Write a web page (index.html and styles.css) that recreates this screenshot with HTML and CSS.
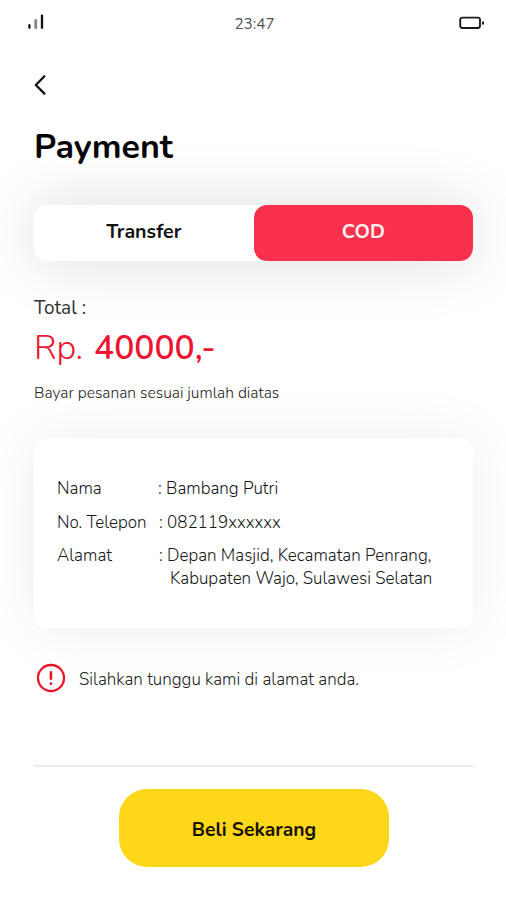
FILE: index.html
```html
<!DOCTYPE html>
<html lang="id">
<head>
<meta charset="utf-8">
<title>Payment</title>
<link rel="stylesheet" href="styles.css">
</head>
<body>
<main class="screen">
  <header class="status">
    <svg class="signal" width="17" height="16" viewBox="0 0 17 16" fill="none" stroke-linecap="round">
      <path d="M2.4 11.2V13.8" stroke="#111" stroke-width="2.2"/>
      <path d="M8.7 6.5V13.8" stroke="#858585" stroke-width="2.8"/>
      <path d="M15 1.6V13.8" stroke="#111" stroke-width="2.3"/>
    </svg>
    <span class="time">23:47</span>
    <svg class="battery" width="26" height="14" viewBox="0 0 26 14" fill="none">
      <rect x="1.2" y="1.6" width="19.8" height="10.4" rx="2.2" stroke="#1b1b1b" stroke-width="1.9"/>
      <path d="M24 6.3V7.7" stroke="#111" stroke-width="1.9" stroke-linecap="round"/>
    </svg>
  </header>
  <button class="back" aria-label="Kembali">
    <svg width="13" height="22" viewBox="0 0 13 22" fill="none" stroke="#111" stroke-width="2.3" stroke-linecap="round" stroke-linejoin="round"><path d="M10.4 2.2L1.8 11L10.4 19.6"/></svg>
  </button>
  <h1 class="title">Payment</h1>
  <div class="tabs">
    <button class="tab">Transfer</button>
    <button class="tab active">COD</button>
  </div>
  <section class="total">
    <p class="label">Total :</p>
    <p class="amount"><span class="currency">Rp.</span><span class="value">40000,-</span></p>
    <p class="hint">Bayar pesanan sesuai jumlah diatas</p>
  </section>
  <dl class="card">
    <dt>Nama</dt><dd class="name"><span class="colon">:</span>Bambang Putri</dd>
    <dt>No. Telepon</dt><dd><span class="colon">:</span>082119xxxxxx</dd>
    <dt>Alamat</dt><dd><span class="colon">:</span>Depan Masjid, Kecamatan Penrang,<br><span class="second">Kabupaten Wajo, Sulawesi Selatan</span></dd>
  </dl>
  <div class="notice">
    <svg width="30" height="30" viewBox="0 0 30 30" fill="none" stroke="#e91728" stroke-linecap="round">
      <circle cx="15" cy="15" r="13" stroke-width="2.3"/>
      <path d="M14.9 9.4V15.7" stroke-width="2.6"/><path d="M14.9 20.6V20.7" stroke-width="2.8"/>
    </svg>
    <span>Silahkan tunggu kami di alamat anda.</span>
  </div>
  <footer class="footer">
    <button class="buy">Beli Sekarang</button>
  </footer>
</main>
</body>
</html>
```
FILE: styles.css
```css
* { box-sizing: border-box; }
body { margin: 0; background: #fff; color: #111; font-family: Nunito, Lato, sans-serif; }
p, h1, dl, dd { margin: 0; }
button { border: 0; padding: 0; background: none; color: inherit; font: inherit; }
svg { display: block; }
.screen { width: 506px; height: 900px; padding: 0 33px 0 34px; overflow: hidden; white-space: nowrap; }
.status { display: flex; justify-content: space-between; height: 46px; margin: 0 -12px 0 -7px; padding-top: 14px; }
.time { margin-left: 6px; font-size: 15.3px; line-height: 20px; color: #555; }
.battery { margin-top: 2px; }
.back { display: block; margin-top: 28px; }
.title { margin-top: 28px; height: 44px; font-weight: 700; font-size: 34px; line-height: 47px; color: #050505; }
.tabs { display: flex; height: 56px; margin-top: 37px; border-radius: 13px; background: #fff; box-shadow: 0 0 65px rgba(0, 0, 0, .14); }
.tab { flex: 1; border-radius: 13px; font-weight: 700; font-size: 19.6px; line-height: 52px; padding-bottom: 3px; }
.tab.active { background: #f9304c; color: #fff0f1; }
.label { margin-top: 35px; font-size: 19px; line-height: 24px; color: #333; }
.amount { display: flex; height: 44px; margin-top: 6px; font-size: 33.6px; line-height: 44px; color: #ed1532; }
.currency { width: 60px; font-size: 34.2px; font-weight: 300; }
.value { font-weight: 600; }
.hint { margin-top: 13px; font-size: 15.6px; font-weight: 300; line-height: 21px; color: #222; }
.card { display: grid; grid-template-columns: 102px 1fr; grid-template-rows: 34px 33px 46px; height: 190px; margin-top: 34px; padding: 39px 0 0 23px; border-radius: 13px; background: #fff; box-shadow: 0 0 60px rgba(0, 0, 0, .075); font-size: 17px; font-weight: 300; line-height: 23px; color: #161616; }
.card .name { margin-left: -1px; }
.colon { display: inline-block; width: 8px; }
.second { margin-left: 11px; }
.notice { display: flex; align-items: center; gap: 13px; height: 30px; margin: 35px 0 0 2px; font-size: 17px; font-weight: 300; color: #222; }
.notice span { padding-top: 3px; }
.footer { margin-top: 72px; padding-top: 22px; border-top: 2px solid #ebebeb; }
.buy { display: block; width: 270px; height: 78px; margin-left: 85px; padding-top: 2px; border-radius: 28px; background: #ffd71a; color: #161200; font-weight: 700; font-size: 19.3px; }
```
